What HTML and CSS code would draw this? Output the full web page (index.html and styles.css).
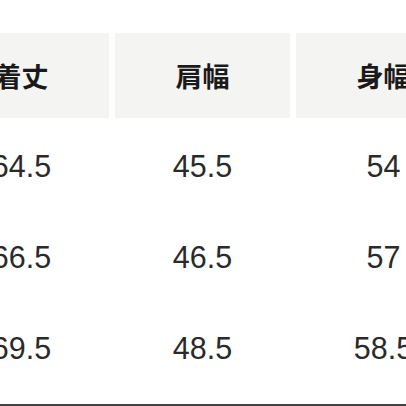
FILE: index.html
```html
<!DOCTYPE html>
<html lang="ja">
<head>
<meta charset="utf-8">
<link rel="stylesheet" href="styles.css">
</head>
<body>
<div class="page">
  <div class="table">
    <div class="th">着丈</div>
    <div class="th">肩幅</div>
    <div class="th">身幅</div>
    <div class="td">64.5</div>
    <div class="td">45.5</div>
    <div class="td">54</div>
    <div class="td">66.5</div>
    <div class="td">46.5</div>
    <div class="td">57</div>
    <div class="td">69.5</div>
    <div class="td">48.5</div>
    <div class="td">58.5</div>
  </div>
  <div class="rule"></div>
</div>
</body>
</html>
```
FILE: styles.css
```css
html, body {
  margin: 0;
  padding: 0;
  overflow: hidden;
  background: #ffffff;
  width: 406px;
  height: 406px;
}
.page {
  width: 406px;
  height: 406px;
  padding-top: 30px;
  box-sizing: border-box;
  overflow: hidden;
}
.table {
  display: grid;
  grid-template-columns: repeat(3, 175px);
  grid-auto-rows: 91px;
  column-gap: 6px;
  margin-left: -66px;
  width: 537px;
}
.th {
  margin: 3px 0;
  background: #f4f4f2;
  display: flex;
  align-items: center;
  justify-content: center;
  font-family: "Noto Sans CJK JP", "Noto Sans", sans-serif;
  font-weight: 700;
  font-size: 27px;
  color: #1a1a1a;
}
.td {
  display: flex;
  align-items: center;
  justify-content: center;
  font-family: "Liberation Sans", Arial, sans-serif;
  font-size: 30.5px;
  color: #2a2a2a;
}
.rule {
  margin-top: 10px;
  border-top: 2px solid #444444;
  width: 406px;
}
```
